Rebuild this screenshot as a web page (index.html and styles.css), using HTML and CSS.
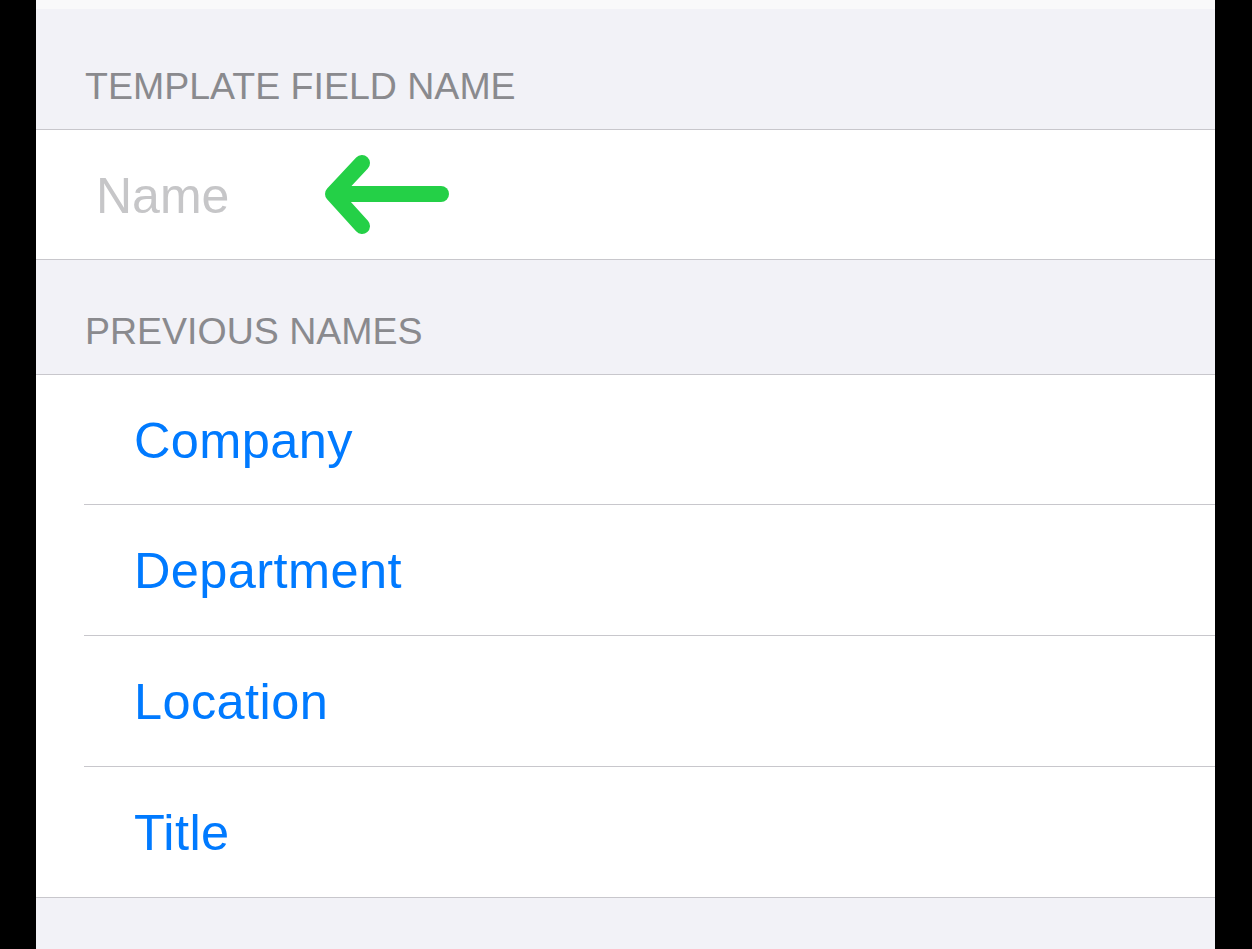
FILE: index.html
```html
<!DOCTYPE html>
<html>
<head>
<meta charset="utf-8">
<title>Template Field Name</title>
<link rel="stylesheet" href="styles.css">
</head>
<body>
<div class="screen">
  <div class="topbar"></div>
  <div class="section-header first"><span>TEMPLATE FIELD NAME</span></div>
  <div class="group">
    <div class="field-row">
      <span class="placeholder">Name</span>
      <svg class="arrow" width="130" height="90" viewBox="0 0 130 90">
        <polyline points="37,14 8,45 37,77" fill="none" stroke="#24d047" stroke-width="16" stroke-linecap="round" stroke-linejoin="round"/>
        <line x1="10" y1="45" x2="116" y2="45" stroke="#24d047" stroke-width="16" stroke-linecap="round"/>
      </svg>
    </div>
  </div>
  <div class="section-header second"><span>PREVIOUS NAMES</span></div>
  <div class="group">
    <div class="item first"><span>Company</span></div>
    <div class="item"><span>Department</span></div>
    <div class="item"><span>Location</span></div>
    <div class="item last"><span>Title</span></div>
  </div>
  <div class="filler"></div>
</div>
</body>
</html>
```
FILE: styles.css
```css
* { box-sizing: border-box; }
html, body {
  margin: 0;
  padding: 0;
  background: #000;
  height: 100%;
  overflow: hidden;
}
body {
  font-family: "Liberation Sans", Arial, sans-serif;
}
.screen {
  margin-left: 36px;
  width: 1179px;
  height: 949px;
  background: #f2f2f7;
  display: flex;
  flex-direction: column;
}
.topbar {
  height: 9px;
  background: #f9f9fa;
}
.section-header {
  display: flex;
  align-items: flex-end;
  padding-left: 49px;
  padding-bottom: 24px;
  font-size: 37.5px;
  line-height: 37.5px;
  color: #8a8a8e;
  border-bottom: 1px solid #c8c7cc;
}
.section-header.first { height: 121px; }
.section-header.second { height: 115px; }
.group {
  background: #fff;
  border-bottom: 1px solid #c8c7cc;
}
.field-row {
  height: 129px;
  display: flex;
  align-items: center;
  padding-left: 60px;
  padding-top: 3px;
}
.placeholder {
  font-size: 50px;
  line-height: 50px;
  color: #c6c6c8;
}
.arrow {
  margin-left: 96px;
  margin-top: -4px;
  display: block;
}
.item {
  margin-left: 48px;
  height: 131px;
  display: flex;
  align-items: center;
  padding-left: 50px;
  padding-top: 3px;
  border-bottom: 1px solid #c8c7cc;
  font-size: 50.5px;
  line-height: 50.5px;
  letter-spacing: 0.4px;
  color: #007aff;
}
.item.first { height: 130px; }
.item.last { border-bottom: none; height: 130px; }
.filler { flex: 1; }
```
